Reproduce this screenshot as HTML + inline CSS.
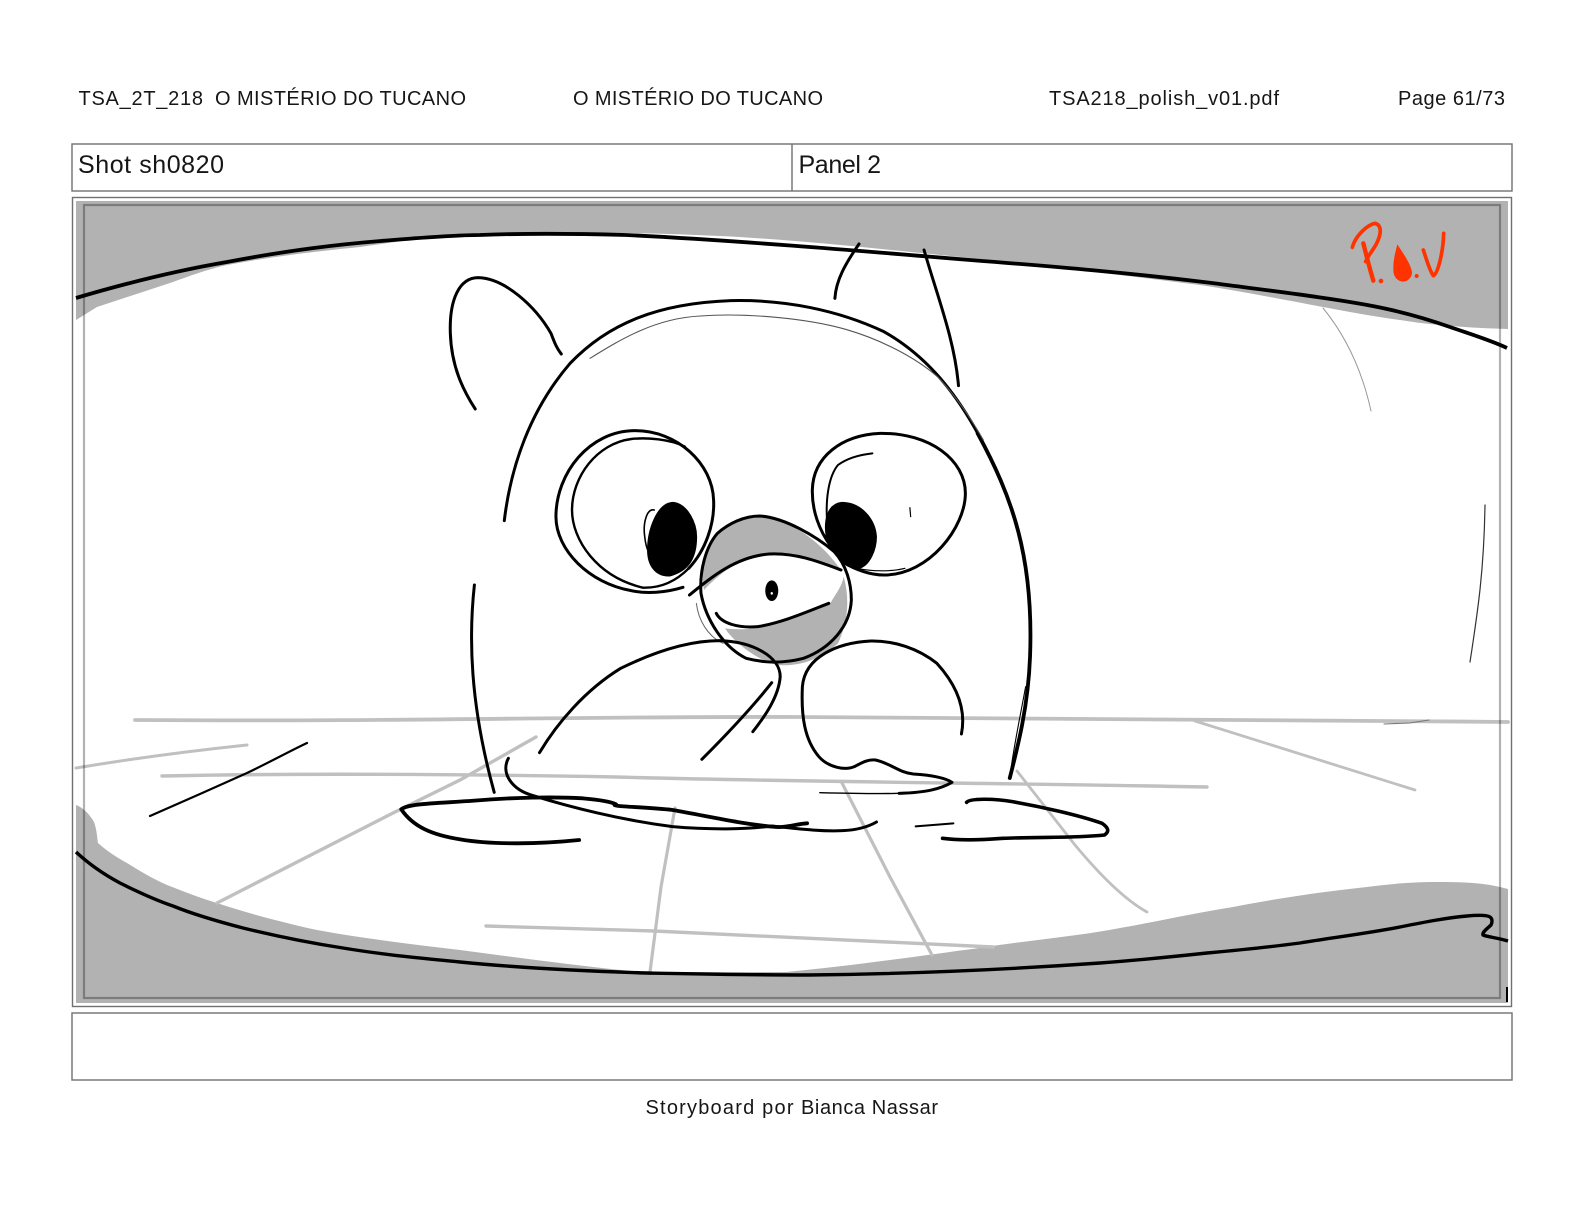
<!DOCTYPE html>
<html><head><meta charset="utf-8"><style>
html,body{margin:0;padding:0;background:#fff}
svg{display:block}
text{font-family:"Liberation Sans",sans-serif;fill:#161616}
.k path,.k ellipse{vector-effect:non-scaling-stroke}
.k{fill:none;stroke:#000;stroke-linecap:round;stroke-linejoin:round}
</style></head><body>
<svg width="1584" height="1224" viewBox="0 0 1584 1224" xmlns="http://www.w3.org/2000/svg">
<rect width="1584" height="1224" fill="#fff"/>
<text x="78.5" y="105" font-size="20" textLength="124.5" lengthAdjust="spacing">TSA_2T_218</text>
<text x="215" y="105" font-size="20" textLength="251" lengthAdjust="spacing">O MISTÉRIO DO TUCANO</text>
<text x="573" y="105" font-size="20" textLength="250" lengthAdjust="spacing">O MISTÉRIO DO TUCANO</text>
<text x="1049" y="105" font-size="20" textLength="230" lengthAdjust="spacing">TSA218_polish_v01.pdf</text>
<text x="1398" y="105" font-size="20" textLength="107" lengthAdjust="spacing">Page 61/73</text>
<rect x="72" y="144" width="1440" height="47" fill="none" stroke="#707070" stroke-width="1.4"/>
<path d="M792 144V191" stroke="#707070" stroke-width="1.4"/>
<text x="78" y="173" font-size="25" textLength="146" lengthAdjust="spacing">Shot sh0820</text>
<text x="798.5" y="173" font-size="25" textLength="82.5" lengthAdjust="spacing">Panel 2</text>
<rect x="72.5" y="197.5" width="1439" height="809" fill="#fff" stroke="#707070" stroke-width="1.4"/>
<!-- gray areas -->
<path fill="#b2b2b2" d="M76 201H1508V329C1470 328 1430 325 1400 320C1370 316 1345 311 1323 307C1280 299 1240 291 1200 285C1120 275 1050 266 970 258C890 250 800 240 720 236C640 232 560 232 480 235C440 236 400 241 360 247C310 252 270 257 227 265C205 270 190 276 170 283L97 307 76 320Z"/>
<path fill="#b2b2b2" d="M76 805C84 808 90 815 94 822C97 830 97 838 98 843C108 852 118 858 127 863C140 871 153 879 167 885C185 892 200 898 217 903C250 914 285 923 317 930C360 938 410 944 460 950C520 958 580 966 640 972H786C850 966 920 956 979 948C1030 940 1080 936 1120 928C1160 921 1195 913 1233 907C1280 898 1320 892 1367 887C1390 884 1412 882 1433 882C1450 882 1468 882 1483 884C1492 885 1500 887 1508 889V1003H76Z"/>
<!-- floor lines -->
<g fill="none" stroke="#c0c0c0" stroke-linecap="round" stroke-linejoin="round">
<path stroke-width="3.8" d="M135 720C400 722 600 716 800 717C1100 719 1300 720 1508 722"/>
<path stroke-width="3.4" d="M162 776C300 773 450 774 616 777C800 782 1000 783 1207 787"/>
<path stroke-width="3" d="M76 768C130 759 190 751 247 745"/>
<path stroke-width="3.4" d="M217 903 393 813 460 780 536 737"/>
<path stroke-width="3.2" d="M675 808 661 887 650 972"/>
<path stroke-width="3.2" d="M842 783 890 877 932 955"/>
<path stroke-width="2.8" d="M1017 771 1075 845C1100 875 1125 900 1147 912"/>
<path stroke-width="3.4" d="M486 926 654 931 993 947"/>
<path stroke-width="2.8" d="M1195 721 1415 790"/>
</g>
<!-- thin lines -->
<g fill="none" stroke-linecap="round">
<path stroke="#999" stroke-width="1" d="M1323 308C1345 335 1362 370 1371 411"/>
<path stroke="#333" stroke-width="1.2" d="M1485 505C1484 570 1478 610 1470 662"/>
<path stroke="#777" stroke-width="1.1" d="M1384 724 1410 723 1429 720"/>
</g>
<!-- black frame curves -->
<g fill="none" stroke="#000" stroke-linecap="butt" stroke-linejoin="round">
<path stroke-width="3.8" d="M76 298C130 282 180 270 227 262C290 250 340 244 393 240C430 237 460 235 480 235C530 233 590 234 626 235C730 240 850 250 970 260C1060 267 1130 273 1212 283C1250 288 1290 293 1317 297C1345 301 1365 304 1387 309C1410 314 1430 320 1450 327C1470 334 1490 340 1507 348"/>
<path stroke-width="3.4" d="M76 852C90 865 105 875 120 883C140 893 155 900 173 906C195 915 220 922 243 928C280 937 310 943 343 948C385 955 420 958 460 962C520 968 580 971 647 973C700 974 750 975 808 975C900 974 1000 970 1100 963C1140 960 1170 957 1207 953C1240 950 1270 947 1300 943C1330 938 1370 933 1400 927C1425 922 1445 918 1467 916C1478 915 1487 915 1490 917C1493 919 1492 923 1491 925C1488 928 1482 932 1483 935C1488 937 1498 938 1508 941"/>
<path stroke-width="2" d="M1507 987V1002"/>
<path stroke-width="2.2" stroke-linecap="round" d="M150 816 200 794 247 773C270 762 290 751 307 743"/>
</g>
<!-- face: zoom-3 coordinates -->
<g class="k" stroke-width="3" transform="translate(440 240) scale(.38265 .33333)">
<path fill="#b2b2b2" stroke="none" d="M690 1050C680 990 695 920 725 880C755 850 795 828 835 828C900 832 985 890 1045 985C990 965 930 940 860 942C790 950 740 990 690 1050Z"/>
<path fill="#b2b2b2" stroke="none" d="M1055 1010C1072 1080 1065 1150 1040 1210C990 1260 940 1280 880 1275C830 1260 770 1210 745 1165C780 1170 840 1170 900 1145C950 1125 1010 1095 1020 1090C1035 1060 1050 1040 1055 1010Z"/>
<path d="M92 507C60 450 30 380 27 280C24 180 50 113 100 113C170 115 250 200 290 280C300 310 305 325 317 342"/>
<path d="M1095 12C1060 70 1035 120 1032 175"/>
<path d="M1265 30C1300 170 1345 300 1355 437"/>
<path d="M168 842C185 680 235 510 340 370C440 250 570 190 760 182C900 178 1040 210 1160 275C1260 340 1340 440 1410 590"/>
<path stroke-width="3.8" d="M1405 580C1495 770 1552 950 1542 1250C1537 1400 1510 1520 1489 1614"/>
<path stroke="#555" stroke-width="1.1" d="M392 355C470 300 560 235 680 228C800 218 960 235 1060 268C1150 298 1240 350 1300 410C1350 470 1390 540 1420 600"/>
<path d="M635 1042C590 1058 540 1062 500 1052C390 1030 303 930 303 830C303 700 390 572 510 572C620 572 712 670 715 780C718 850 695 930 650 985"/>
<path stroke-width="2.4" d="M640 620C600 597 540 592 500 597C410 610 345 710 345 810C345 900 410 1010 530 1043C580 1045 620 1020 650 985"/>
<path fill="#000" d="M610 790C645 795 668 850 668 890C668 950 650 990 600 1005C565 1007 545 975 545 930C545 870 570 790 610 790Z"/>
<path stroke-width="1.6" d="M560 810C540 805 530 850 535 890C537 910 540 925 545 935"/>
<path d="M1022 920C990 870 972 810 973 750C975 650 1050 585 1150 580C1280 578 1373 660 1373 760C1373 860 1280 1005 1160 1005C1120 1005 1080 985 1050 965"/>
<path stroke-width="2" d="M1130 640C1090 645 1060 658 1040 675C1015 710 1007 780 1012 850C1015 890 1022 915 1030 930"/>
<path stroke-width="1.2" d="M1090 985C1130 995 1180 995 1215 985"/>
<path fill="#000" d="M1050 790C1100 790 1135 840 1138 890C1138 930 1120 975 1095 982C1060 970 1025 945 1012 890C1005 840 1015 795 1050 790Z"/>
<path stroke-width="1.2" d="M1228 803 1230 830"/>
<path d="M725 880C755 850 795 828 835 828C900 832 985 890 1030 935C1062 975 1075 1030 1075 1080C1072 1160 1020 1225 950 1255C900 1270 850 1270 800 1255C740 1220 695 1140 682 1060C678 990 695 920 725 880Z"/>
<path d="M652 1065C700 1020 770 950 860 942C930 938 990 965 1048 990"/>
<path stroke="#666" stroke-width="1" d="M670 1090C675 1140 700 1190 740 1210"/>
<ellipse cx="867" cy="1052" rx="17" ry="31" fill="#000" stroke="none"/>
<ellipse cx="867" cy="1060" rx="3" ry="4" fill="#fff" stroke="none"/>
<path d="M722 1120C735 1150 780 1165 830 1160C890 1150 960 1115 1016 1090"/>
</g>
<!-- body: zoom-4 coordinates -->
<g class="k" stroke-width="3" transform="translate(380 620) scale(.47194 .33333)">
<path d="M200 -105C188 50 190 250 242 517"/>
<path stroke-width="1.1" d="M1335 470C1340 400 1355 300 1368 200"/>
<path d="M338 398C375 310 435 210 510 145C575 100 650 62 720 62C790 65 848 110 848 170C845 230 815 290 790 335"/>
<path d="M682 418C730 350 790 260 830 188"/>
<path d="M1232 342C1242 270 1225 200 1180 130C1140 85 1090 62 1040 63C970 68 900 110 895 200C892 290 900 360 930 410C950 442 985 452 1005 440C1025 425 1035 418 1050 420C1085 432 1100 458 1130 462C1170 465 1200 475 1212 487C1190 505 1160 518 1100 520"/>
<path stroke-width="1.4" d="M1100 520C1050 522 990 520 932 518"/>
<path stroke-width="3.8" d="M422 660C340 672 240 675 170 658C110 645 70 620 45 568C60 550 120 550 200 542C280 532 370 530 430 535C470 540 490 545 500 553C480 560 560 560 620 570C700 590 760 610 830 620C860 625 880 612 905 610"/>
<path d="M272 415C255 460 280 510 325 527C400 560 510 600 620 620C700 630 780 628 830 618C880 625 930 635 980 632C1010 630 1035 620 1052 606"/>
<path stroke-width="2" d="M1135 619 1215 610"/>
<path stroke-width="3.6" d="M1243 547C1250 535 1300 535 1340 545C1400 560 1480 585 1530 610C1545 625 1545 635 1535 645C1470 655 1400 650 1320 655C1270 660 1230 662 1192 655"/>
</g>
<!-- inner translucent frame -->
<rect x="84" y="205" width="1416" height="793" fill="none" stroke="#000" stroke-opacity=".3" stroke-width="2.2"/>
<!-- POV -->
<g transform="translate(1200 130) scale(.33333)" fill="none" stroke="#ff3300" stroke-width="12" stroke-linecap="round" stroke-linejoin="round">
<path stroke-width="11" d="M457 352C465 320 500 285 525 280C545 285 545 310 530 340C520 360 505 375 497 395"/>
<path stroke-width="13" d="M490 340C500 380 510 420 520 452"/>
<path stroke="none" fill="#ff3300" d="M592 343C610 370 637 410 636 430C630 462 590 464 581 430C577 400 585 370 592 343Z"/>
<path stroke-width="11" d="M670 360C680 390 690 425 700 437C715 430 730 360 731 310"/>
<circle cx="543" cy="453" r="7" fill="#ff3300" stroke="none"/>
<circle cx="650" cy="438" r="6" fill="#ff3300" stroke="none"/>
</g>
<rect x="72" y="1013" width="1440" height="67" fill="#fff" stroke="#707070" stroke-width="1.4"/>
<text x="645.5" y="1114" font-size="20" textLength="148" lengthAdjust="spacing">Storyboard por</text>
<text x="801" y="1114" font-size="20" textLength="137" lengthAdjust="spacing">Bianca Nassar</text>
</svg>
</body></html>
